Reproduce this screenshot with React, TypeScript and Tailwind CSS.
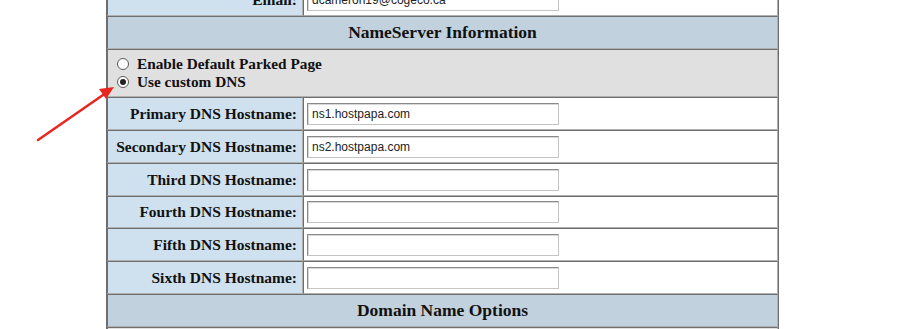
import React from "react";

const cell =
  "border border-t-[#6e6e6e] border-l-[#6e6e6e] border-b-[#b0b0b0] border-r-[#b0b0b0]";

function Row({ label, value, h = "h-[33px]" }: { label: string; value?: string; h?: string }) {
  return (
    <div className={`flex ${h}`}>
      <div
        className={`${cell} w-[196px] shrink-0 bg-[#cfe0ee] flex items-center justify-end pr-[5px] text-[15.5px] font-bold text-[#111]`}
      >
        {label}
      </div>
      <div className={`${cell} flex-1 bg-white flex items-center pl-[3px]`}>
        <div className="w-[252px] h-[22px] border border-t-[#8a8a8a] border-l-[#8a8a8a] border-b-[#c4c4c4] border-r-[#c4c4c4] shadow-[inset_1px_1px_0_#d8d8d8] bg-white flex items-center pl-[4px] text-[12px] text-[#222] font-['Liberation_Sans',Arial,sans-serif] font-normal">
          {value}
        </div>
      </div>
    </div>
  );
}

function Header({ title }: { title: string }) {
  return (
    <div className={`${cell} h-[33px] bg-[#c1d1dd] flex items-center justify-center text-[17.5px] font-bold text-[#111]`}>
      {title}
    </div>
  );
}

function Radio({ checked }: { checked?: boolean }) {
  return (
    <span className="w-[12px] h-[12px] rounded-full border border-[#5a5a5a] bg-white flex items-center justify-center mr-[8px]">
      {checked && <span className="w-[6px] h-[6px] rounded-full bg-[#222]" />}
    </span>
  );
}

export default function App() {
  return (
    <div className="relative w-[920px] h-[329px] overflow-hidden bg-white font-['Liberation_Serif','Times_New_Roman',serif]">
      <div className="pl-[106px] -mt-[18px]">
        <div className="w-[673px] border border-t-[#b0b0b0] border-l-[#6e6e6e] border-b-[#6e6e6e] border-r-[#6e6e6e]">
          <Row label="Email:" value="dcameron19@cogeco.ca" />
          <Header title="NameServer Information" />
          <div className={`${cell} h-[48px] bg-[#e0e0e0] flex flex-col justify-center pl-[9px] text-[15.3px] font-bold text-[#111]`}>
            <div className="flex items-center h-[18px]">
              <Radio />
              <span>Enable Default Parked Page</span>
            </div>
            <div className="flex items-center h-[18px]">
              <Radio checked />
              <span>Use custom DNS</span>
            </div>
          </div>
          <Row label="Primary DNS Hostname:" value="ns1.hostpapa.com" />
          <Row label="Secondary DNS Hostname:" value="ns2.hostpapa.com" />
          <Row label="Third DNS Hostname:" />
          <Row label="Fourth DNS Hostname:" h="h-[32px]" />
          <Row label="Fifth DNS Hostname:" />
          <Row label="Sixth DNS Hostname:" />
          <Header title="Domain Name Options" />
          <div className={`${cell} h-[33px] bg-[#e0e0e0]`} />
        </div>
      </div>
      <svg className="absolute left-0 top-0" width="920" height="329" viewBox="0 0 920 329">
        <line x1="38" y1="140" x2="103" y2="95" stroke="#e8261f" strokeWidth="2.5" strokeLinecap="round" />
        <polygon points="114,87 99,89 106,99" fill="#e8261f" />
      </svg>
    </div>
  );
}
